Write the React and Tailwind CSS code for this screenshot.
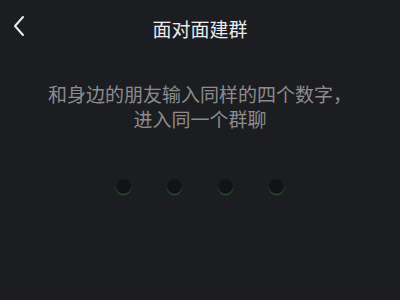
import React from 'react';

export default function App() {
  return (
    <div className="w-[400px] h-[300px] bg-[#1c1d21] overflow-hidden" style={{ fontFamily: '"Noto Sans CJK SC", "Noto Sans", sans-serif' }}>
      {/* Header */}
      <div className="relative h-[56px] flex items-center justify-center">
        <svg className="absolute left-[13px] top-[15px]" width="12" height="22" viewBox="0 0 12 22" fill="none">
          <path d="M10 2 L2 11 L10 20" stroke="#ececec" strokeWidth="2" strokeLinecap="round" strokeLinejoin="round" />
        </svg>
        <span className="text-[19px] text-[#ececec] leading-none">面对面建群</span>
      </div>

      {/* Hint */}
      <div className="mt-[25px] text-center text-[19px] leading-[25px] text-[#8c8c8e]">
        <p>和身边的朋友输入同样的四个数字，</p>
        <p>进入同一个群聊</p>
      </div>

      {/* Code dots */}
      <div className="mt-[48px] flex justify-center gap-[36px]">
        {[1, 2, 3, 4].map((i) => (
          <div key={i} className="w-[15px] h-[15px] rounded-full bg-[#121314] shadow-[0_1px_1px_rgba(60,160,70,0.55)]"></div>
        ))}
      </div>
    </div>
  );
}
